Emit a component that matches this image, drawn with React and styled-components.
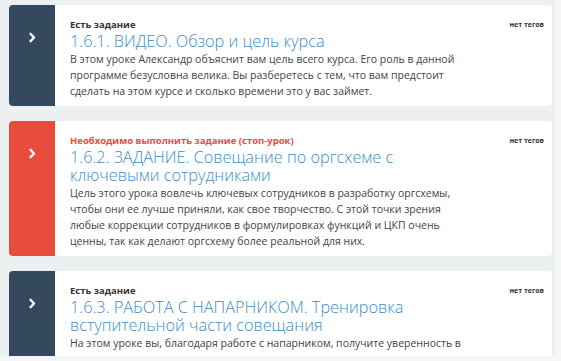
import React from "react";
import styled, { createGlobalStyle } from "styled-components";

const GlobalStyle = createGlobalStyle`
  html, body {
    margin: 0;
    padding: 0;
    background: #f4f6f7;
  }
  * {
    box-sizing: border-box;
  }
`;

const Frame = styled.div`
  width: 555px;
  height: 356px;
  overflow: hidden;
  background: #edf0f1;
  padding: 5px 0 0 9px;
  font-family: "Open Sans", "Noto Sans", sans-serif;
`;

const Card = styled.div`
  display: flex;
  width: 543px;
  background: #fff;
  border-radius: 4px;
  overflow: hidden;
  margin-bottom: 15px;
`;

const Side = styled.div`
  flex: 0 0 46px;
  background: ${(props) => (props.stop ? "#e74c3c" : "#34495e")};
  display: flex;
  justify-content: center;
  align-items: flex-start;
  padding-top: 27px;
`;

const Body = styled.div`
  flex: 1;
  display: flex;
  padding: 13px 8px 7px 15px;
`;

const Content = styled.div`
  width: 392px;
`;

const Label = styled.div`
  font-size: 9.5px;
  font-weight: 700;
  line-height: 14px;
  color: ${(props) => (props.stop ? "#e74c3c" : "#333")};
`;

const Title = styled.div`
  font-size: 16.3px;
  font-weight: 300;
  line-height: 18px;
  color: #3b8dca;
  margin-bottom: 1px;
`;

const Text = styled.div`
  font-size: 10.5px;
  line-height: 16px;
  color: #444;
`;

const Tags = styled.div`
  margin-left: auto;
  font-size: 7px;
  font-weight: 700;
  color: #333;
  padding-top: 2px;
  white-space: nowrap;
`;

const Chevron = () => (
  <svg width="9" height="11" viewBox="0 0 9 11">
    <path
      d="M2.5 1.8 L6 5.5 L2.5 9.2"
      fill="none"
      stroke="#fff"
      strokeWidth="2.4"
      strokeLinecap="round"
      strokeLinejoin="round"
    />
  </svg>
);

const lessons = [
  {
    stop: false,
    label: "Есть задание",
    title: "1.6.1. ВИДЕО. Обзор и цель курса",
    text:
      "В этом уроке Александр объяснит вам цель всего курса. Его роль в данной программе безусловна велика. Вы разберетесь с тем, что вам предстоит сделать на этом курсе и сколько времени это у вас займет.",
  },
  {
    stop: true,
    label: "Необходимо выполнить задание (стоп-урок)",
    title: "1.6.2. ЗАДАНИЕ. Совещание по оргсхеме с ключевыми сотрудниками",
    text:
      "Цель этого урока вовлечь ключевых сотрудников в разработку оргсхемы, чтобы они ее лучше приняли, как свое творчество. С этой точки зрения любые коррекции сотрудников в формулировках функций и ЦКП очень ценны, так как делают оргсхему более реальной для них.",
  },
  {
    stop: false,
    label: "Есть задание",
    title: "1.6.3. РАБОТА С НАПАРНИКОМ. Тренировка вступительной части совещания",
    text:
      "На этом уроке вы, благодаря работе с напарником, получите уверенность в начале совещания по оргсхеме, своих примерах, и в том, что сможете убедительно провести вступление.",
  },
];

export default function App() {
  return (
    <>
      <GlobalStyle />
      <Frame>
        {lessons.map((lesson, i) => (
          <Card key={i}>
            <Side stop={lesson.stop}>
              <Chevron />
            </Side>
            <Body>
              <Content>
                <Label stop={lesson.stop}>{lesson.label}</Label>
                <Title>{lesson.title}</Title>
                <Text>{lesson.text}</Text>
              </Content>
              <Tags>нет тегов</Tags>
            </Body>
          </Card>
        ))}
      </Frame>
    </>
  );
}
